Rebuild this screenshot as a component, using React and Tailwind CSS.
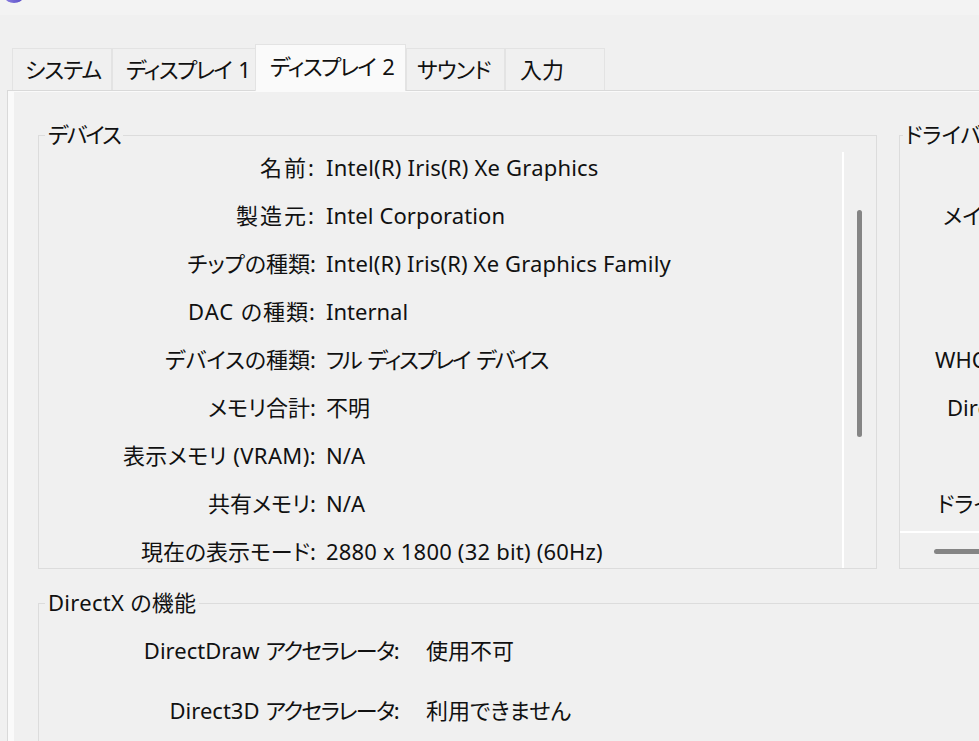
import React from "react";

// katakana runs set a little tighter; word gaps keep their width
function Tight({ words, className = "tracking-[-1.6px]" }) {
  return (
    <>
      {words.map((w, i) => (
        <React.Fragment key={i}>
          {i > 0 && <span className="inline-block w-[7px]" />}
          <span className={className}>{w}</span>
        </React.Fragment>
      ))}
    </>
  );
}

const tabs = [
  { key: "sys", label: <Tight words={["システム"]} className="tracking-[-1px]" />, w: "w-[100px]", pl: "pl-[12px]" },
  { key: "d1", label: <Tight words={["ディスプレイ", "1"]} className="tracking-[-1.6px]" />, w: "w-[144px]", pl: "pl-[13px]" },
  { key: "d2", label: <Tight words={["ディスプレイ", "2"]} className="tracking-[-1.6px]" />, w: "w-[151px]", pl: "pl-[14px]", active: true },
  { key: "snd", label: <Tight words={["サウンド"]} className="tracking-[-1px]" />, w: "w-[99px]", pl: "pl-[10px]" },
  { key: "in", label: "入力", w: "w-[100px]", pl: "pl-[14px]" },
];

const deviceRows = [
  { label: "名前:", value: "Intel(R) Iris(R) Xe Graphics", lt: "tracking-[2px]", vt: "tracking-[0.2px]" },
  { label: "製造元:", value: "Intel Corporation", lt: "tracking-[2px]", vt: "tracking-[0.1px]" },
  { label: "チップの種類:", value: "Intel(R) Iris(R) Xe Graphics Family", vt: "tracking-[0.15px]" },
  { label: "DAC の種類:", value: "Internal", lt: "tracking-[1px]" },
  { label: "デバイスの種類:", value: <Tight words={["フル", "ディスプレイ", "デバイス"]} className="tracking-[-2.2px]" /> },
  { label: "メモリ合計:", value: "不明" },
  { label: "表示メモリ (VRAM):", value: "N/A", lt: "tracking-[0.4px]" },
  { label: "共有メモリ:", value: "N/A" },
  { label: "現在の表示モード:", value: "2880 x 1800 (32 bit) (60Hz)", vt: "tracking-[0.2px]" },
];

// driver labels are right-aligned and run past the window edge
const driverRows = [
  { label: "", pl: "pl-[80px]" },
  { label: "メイン ドライバー:", pl: "pl-[43px]" },
  { label: "", pl: "pl-[80px]" },
  { label: "", pl: "pl-[80px]" },
  { label: "WHQL ロゴ:", pl: "pl-[35px]" },
  { label: "Direct3D DDI:", pl: "pl-[47px]" },
  { label: "", pl: "pl-[80px]" },
  { label: "ドライバー モデル:", pl: "pl-[37px]" },
];

const directxRows = [
  { key: "dd", label: <><span>DirectDraw</span><span className="inline-block w-[6px]" /><span className="tracking-[-1.6px]">アクセラレータ:</span></>, value: "使用不可" },
  { key: "d3", label: <><span>Direct3D</span><span className="inline-block w-[6px]" /><span className="tracking-[-1.6px]">アクセラレータ:</span></>, value: "利用できません" },
];

function AppIcon() {
  return (
    <svg width="30" height="6" viewBox="0 0 30 6" className="absolute left-0 top-0">
      <defs>
        <linearGradient id="dxg" x1="0" y1="0" x2="1" y2="0">
          <stop offset="0" stopColor="#8a7fe0" />
          <stop offset="1" stopColor="#5b4fc8" />
        </linearGradient>
      </defs>
      <ellipse cx="14" cy="-3" rx="9" ry="6" fill="url(#dxg)" />
    </svg>
  );
}

export default function App() {
  return (
    <div className="relative w-[979px] h-[741px] overflow-hidden bg-[#f0f0f0] text-[#111] text-[22px] font-['Noto_Sans','Noto_Sans_CJK_JP',sans-serif] [font-feature-settings:'palt']">
      {/* title strip */}
      <div className="relative h-[15px] bg-[#f3f3f3]">
        <AppIcon />
      </div>

      {/* tab headers */}
      <div className="mt-[30px] flex h-[45px] items-end pl-[12px]">
        {tabs.map((t) =>
          t.active ? (
            <div
              key={t.key}
              className={`relative z-10 -mb-px flex h-[47px] items-center ${t.w} ${t.pl} -ml-px border-x border-t border-[#e3e3e3] bg-[#fafafa] pb-[4px] whitespace-nowrap`}
            >
              {t.label}
            </div>
          ) : (
            <div
              key={t.key}
              className={`flex h-[42px] items-center ${t.w} ${t.pl} border-r border-t border-l border-[#e3e3e3] bg-[#f0f0f0] whitespace-nowrap`}
            >
              {t.label}
            </div>
          )
        )}
      </div>

      {/* tab page */}
      <div className="ml-[7px] h-[700px] border-l border-t border-[#d9d9d9] bg-[#fafafa] pl-[6px] pt-px">
        <div className="h-full bg-[#f0f0f0] pl-[24px] pt-[33px]">
          <div className="flex gap-[22px]">
            {/* device group */}
            <fieldset className="h-[444px] w-[839px] min-w-0 shrink-0 border border-[#dcdcdc]">
              <legend className="ml-[6px] px-[3px] leading-[20px] tracking-[-2px]">
                <span className="relative -top-px">デバイス</span>
              </legend>
              <div className="flex h-full">
                <div className="h-full flex-1 overflow-hidden">
                  <div className="-mt-[2px]">
                    {deviceRows.map((r) => (
                      <div key={r.label} className="flex h-[48px] items-center whitespace-nowrap">
                        <div className={`w-[277px] shrink-0 text-right ${r.lt || ""}`}>{r.label}</div>
                        <div className={`pl-[10px] ${r.vt || ""}`}>{r.value}</div>
                      </div>
                    ))}
                  </div>
                </div>
                <div className="mt-[7px] w-[34px] shrink-0 border-l-2 border-white pl-[13px]">
                  <div className="mt-[58px] h-[227px] w-[5px] rounded-full bg-[#858585]" />
                </div>
              </div>
            </fieldset>

            {/* driver group */}
            <fieldset className="h-[444px] w-[320px] min-w-0 shrink-0 border border-[#dcdcdc]">
              <legend className="ml-[3px] px-[2px] leading-[20px] whitespace-nowrap">
                <span className="relative -top-px">ドライバー</span>
              </legend>
              <div className="flex h-full flex-col">
                <div className="h-[386px] overflow-hidden">
                  <div className="-mt-[2px]">
                    {driverRows.map((r, i) => (
                      <div key={i} className={`flex h-[48px] items-center whitespace-nowrap ${r.pl}`}>
                        {r.label}
                      </div>
                    ))}
                  </div>
                </div>
                <div className="flex-1 border-t-2 border-white pl-[34px] pt-[16px]">
                  <div className="h-[5px] w-[200px] rounded-full bg-[#858585]" />
                </div>
              </div>
            </fieldset>
          </div>

          {/* DirectX features group */}
          <fieldset className="mt-[24px] h-[300px] w-[1000px] min-w-0 border border-[#dcdcdc]">
            <legend className="ml-[6px] px-[3px] leading-[20px] whitespace-nowrap tracking-[0.3px]">
              <span className="relative -top-px">DirectX の機能</span>
            </legend>
            <div className="pt-[7px]">
              {directxRows.map((r) => (
                <div key={r.key} className="flex h-[60px] items-center whitespace-nowrap">
                  <div className="w-[359px] shrink-0 text-right">{r.label}</div>
                  <div className="pl-[28px]">{r.value}</div>
                </div>
              ))}
            </div>
          </fieldset>
        </div>
      </div>
    </div>
  );
}
